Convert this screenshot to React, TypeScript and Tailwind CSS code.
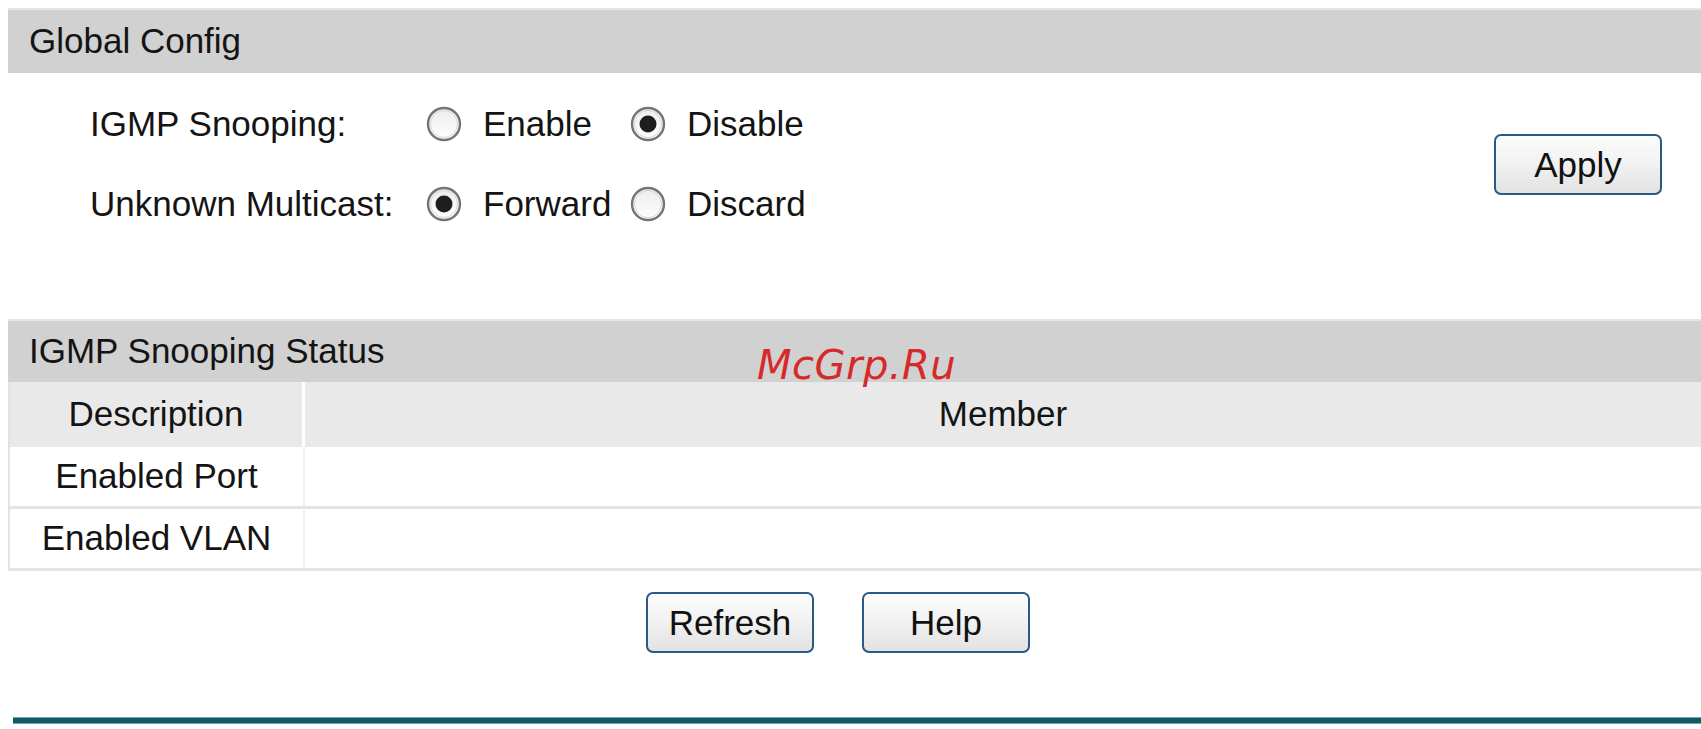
import React, { useState } from "react";

type Choice = { label: string; value: string };

const rows: { label: string; name: string; options: Choice[]; initial: string }[] = [
  {
    label: "IGMP Snooping:",
    name: "snooping",
    options: [
      { label: "Enable", value: "enable" },
      { label: "Disable", value: "disable" },
    ],
    initial: "disable",
  },
  {
    label: "Unknown Multicast:",
    name: "multicast",
    options: [
      { label: "Forward", value: "forward" },
      { label: "Discard", value: "discard" },
    ],
    initial: "forward",
  },
];

const Radio: React.FC<{ checked: boolean; onClick: () => void }> = ({ checked, onClick }) => (
  <button onClick={onClick} className="w-[36px] h-[36px] shrink-0">
    <svg viewBox="0 0 36 36" width="36" height="36">
      <defs>
        <linearGradient id="rg" x1="0" y1="0" x2="0" y2="1">
          <stop offset="0" stopColor="#ececec" />
          <stop offset="1" stopColor="#ffffff" />
        </linearGradient>
      </defs>
      <circle cx="18" cy="18" r="16" fill="url(#rg)" stroke="#747474" strokeWidth="2.4" />
      <circle cx="18" cy="18" r="13.5" fill="none" stroke="#d8d8d8" strokeWidth="1" />
      {checked && <circle cx="18" cy="18" r="8.5" fill="#1e1e1e" />}
    </svg>
  </button>
);

const Btn: React.FC<{ children: React.ReactNode }> = ({ children }) => (
  <button className="w-[168px] h-[61px] rounded-[7px] border-[2.5px] border-[#2a5987] bg-gradient-to-b from-[#fcfcfc] via-[#f1f1f1] to-[#e2e2e2] text-[35px] text-[#111] leading-none">
    {children}
  </button>
);

export default function App() {
  const [values, setValues] = useState<Record<string, string>>(
    Object.fromEntries(rows.map((r) => [r.name, r.initial]))
  );

  return (
    <div className="relative w-[1701px] h-[729px] overflow-hidden bg-white pt-[8px] pl-[8px] font-['Liberation_Sans',Arial,sans-serif] text-[35px] text-[#141414]">
      {/* Global Config */}
      <div className="h-[65px] flex items-center pl-[21px] bg-[#d1d1d1] border-t-2 border-[#e6e6e6]">
        Global Config
      </div>
      <div className="pt-[11px] pb-[75px] flex items-center">
        <div className="flex-1 pl-[82px]">
          {rows.map((row) => (
            <div key={row.name} className="h-[80px] flex items-center">
              <div className="w-[336px] shrink-0">{row.label}</div>
              {row.options.map((opt, i) => (
                <div key={opt.value} className={`flex items-center gap-[21px] ${i === 0 ? "w-[204px]" : ""}`}>
                  <Radio
                    checked={values[row.name] === opt.value}
                    onClick={() => setValues({ ...values, [row.name]: opt.value })}
                  />
                  <span>{opt.label}</span>
                </div>
              ))}
            </div>
          ))}
        </div>
        <div className="mr-[39px]">
          <Btn>Apply</Btn>
        </div>
      </div>

      {/* IGMP Snooping Status */}
      <div className="h-[63px] flex items-center pl-[21px] bg-[#d1d1d1] border-t-2 border-[#e6e6e6]">
        IGMP Snooping Status
      </div>
      <div className="border-l-2 border-[#e2e2e2]">
        <div className="h-[65px] flex bg-[#e9e9e9]">
          <div className="w-[295px] flex items-center justify-center border-r-[3px] border-white">Description</div>
          <div className="flex-1 flex items-center justify-center">Member</div>
        </div>
        {["Enabled Port", "Enabled VLAN"].map((label) => (
          <div key={label} className="h-[62px] flex border-b-[3px] border-[#e4e4e4]">
            <div className="w-[295px] flex items-center justify-center border-r-2 border-[#f0f0f0]">{label}</div>
            <div className="flex-1" />
          </div>
        ))}
      </div>
      <div className="pt-[21px] flex justify-center gap-[48px] pr-[33px]">
        <Btn>Refresh</Btn>
        <Btn>Help</Btn>
      </div>
      <div className="mt-[64px] ml-[5px] h-[7px] bg-[#0f5a67] border-y border-[#79a2aa]" />

      {/* watermark */}
      <div className="absolute left-[757px] top-[345px] font-['DejaVu_Sans',sans-serif] italic text-[40px] tracking-[0.5px] text-[#d62a2a] leading-none">
        McGrp.Ru
      </div>
    </div>
  );
}
